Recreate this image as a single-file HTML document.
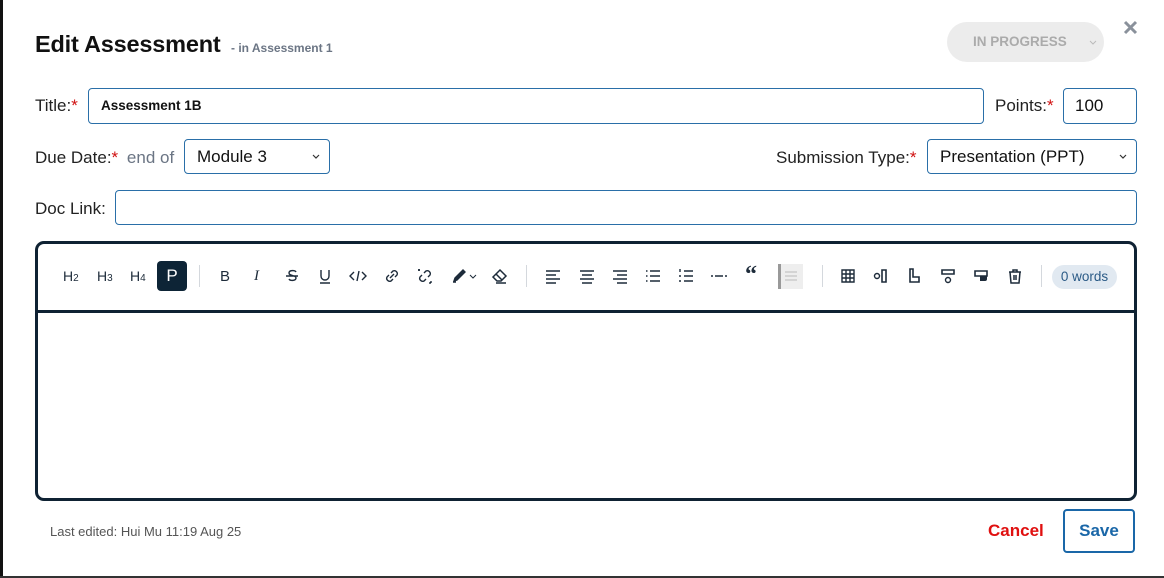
<!DOCTYPE html>
<html><head><meta charset="utf-8"><style>
*{box-sizing:border-box;margin:0;padding:0}
body{width:1164px;height:578px;background:#fff;font-family:"Liberation Sans",Arial,sans-serif;position:relative;overflow:hidden;color:#111}
.a{position:absolute}
.lbl{font-size:17px;color:#222;white-space:nowrap}
.req{color:#d01010}
.inp{position:absolute;border:1px solid #2a6fa8;border-radius:4px;background:#fff}
.sel{position:absolute;border:1px solid #2a6fa8;border-radius:4px;background:#fff;font-size:17px;padding-left:12px;display:flex;align-items:center}
.chev{position:absolute;right:8px;top:50%;margin-top:-4px}
.ic{position:absolute;top:266px;width:20px;height:20px}
.sep{position:absolute;top:265px;width:1px;height:22px;background:#d4d8dd}
.h{position:absolute;top:268px;font-size:14px;color:#1d2b3a}
.h small{font-size:10px}
</style></head><body>
<div class="a" style="left:0;top:0;width:3px;height:578px;background:#111"></div>
<div class="a" style="left:0;top:576px;width:1164px;height:2px;background:#333"></div>

<div class="a" style="left:35px;top:31px;font-size:23.5px;font-weight:bold;color:#111;letter-spacing:-0.2px">Edit Assessment</div>
<div class="a" style="left:231px;top:41px;font-size:12px;font-weight:bold;color:#6b7584;white-space:nowrap">- in Assessment 1</div>

<div class="a" style="left:947px;top:22px;width:157px;height:40px;border-radius:20px;background:#ececec;color:#ababab;font-weight:bold;font-size:13.5px;line-height:40px;padding-left:26px">IN PROGRESS
<svg class="chev" width="10" height="8" viewBox="0 0 10 8" style="right:6px"><path d="M2 3l3 3 3-3" fill="none" stroke="#bbb" stroke-width="1"/></svg></div>
<svg class="a" style="left:1123px;top:20px" width="15" height="15" viewBox="0 0 15 15"><path d="M2 2l11 11M13 2L2 13" stroke="#8a919b" stroke-width="3"/></svg>

<div class="a lbl" style="left:35px;top:96px">Title:<span class="req">*</span></div>
<div class="inp" style="left:88px;top:88px;width:896px;height:36px;font-size:13.5px;font-weight:bold;padding:9px 12px">Assessment 1B</div>
<div class="a lbl" style="left:995px;top:96px">Points:<span class="req">*</span></div>
<div class="inp" style="left:1063px;top:88px;width:74px;height:36px;font-size:17px;padding:7px 11px">100</div>

<div class="a lbl" style="left:35px;top:148px">Due Date:<span class="req">*</span> <span style="color:#6b7584;margin-left:4px">end of</span></div>
<div class="sel" style="left:184px;top:139px;width:146px;height:35px">Module 3<svg class="chev" width="10" height="8" viewBox="0 0 10 8"><path d="M2 2l3 3 3-3" fill="none" stroke="#333" stroke-width="1.2"/></svg></div>
<div class="a lbl" style="left:776px;top:148px">Submission Type:<span class="req">*</span></div>
<div class="sel" style="left:927px;top:139px;width:210px;height:35px">Presentation (PPT)<svg class="chev" width="10" height="8" viewBox="0 0 10 8"><path d="M2 2l3 3 3-3" fill="none" stroke="#333" stroke-width="1.2"/></svg></div>

<div class="a lbl" style="left:35px;top:199px">Doc Link:</div>
<div class="inp" style="left:115px;top:190px;width:1022px;height:35px"></div>

<div class="a" style="left:35px;top:241px;width:1102px;height:260px;border:3px solid #0f2233;border-radius:9px"></div>
<div class="a" style="left:37px;top:310px;width:1098px;height:3px;background:#0f2233"></div>

<div class="h" style="left:63px">H<small>2</small></div>
<div class="h" style="left:97px">H<small>3</small></div>
<div class="h" style="left:130px">H<small>4</small></div>
<div class="a" style="left:157px;top:261px;width:30px;height:30px;background:#0d2436;border-radius:4px;color:#fff;font-size:17px;text-align:center;line-height:30px">P</div>
<div class="sep" style="left:199px"></div>
<div class="h" style="left:220px;font-size:15px">B</div>
<div class="h" style="left:254px;font-size:15px;font-style:italic;font-family:'Liberation Serif',serif">I</div>
<svg class="ic" style="left:282px" viewBox="0 0 20 20"><path d="M14 6c-1-2-7-2-7 1 0 3 7 2 7 5 0 3-6 3-7 1M4 10h12" fill="none" stroke="#1d2b3a" stroke-width="1.4"/></svg>
<svg class="ic" style="left:315px" viewBox="0 0 20 20"><path d="M6 4v6a4 4 0 008 0V4M5 17h10" fill="none" stroke="#1d2b3a" stroke-width="1.4"/></svg>
<svg class="ic" style="left:348px" viewBox="0 0 20 20"><path d="M6 6l-4 4 4 4M14 6l4 4-4 4M11 5l-2 10" fill="none" stroke="#1d2b3a" stroke-width="1.4"/></svg>
<svg class="ic" style="left:382px" viewBox="0 0 20 20"><path d="M9 7l2-2a3 3 0 014 4l-2 2M11 13l-2 2a3 3 0 01-4-4l2-2M8 12l4-4" fill="none" stroke="#1d2b3a" stroke-width="1.4"/></svg>
<svg class="ic" style="left:415px" viewBox="0 0 20 20"><path d="M9 7l2-2a3 3 0 014 4l-2 2M11 13l-2 2a3 3 0 01-4-4l2-2M4 3v2M3 4h2M15 16v2M16 15v2" fill="none" stroke="#1d2b3a" stroke-width="1.4"/></svg>
<svg class="ic" style="left:450px" viewBox="0 0 20 20"><path d="M4 15l3-1 8-8-2-2-8 8zM3 16h3" fill="#1d2b3a" stroke="#1d2b3a" stroke-width="1.4"/></svg>
<svg class="ic" style="left:468px;width:10px" viewBox="0 0 10 20"><path d="M2 9l3 3 3-3" fill="none" stroke="#1d2b3a" stroke-width="1"/></svg>
<svg class="ic" style="left:490px" viewBox="0 0 20 20"><path d="M3 11l7-7 6 6-5 5H7zM6 8l6 6M6 17h10" fill="none" stroke="#1d2b3a" stroke-width="1.5"/></svg>
<div class="sep" style="left:526px"></div>
<svg class="ic" style="left:543px" viewBox="0 0 20 20"><path d="M3 5h14M3 9h10M3 13h14M3 17h10" stroke="#1d2b3a" stroke-width="1.4"/></svg>
<svg class="ic" style="left:577px" viewBox="0 0 20 20"><path d="M3 5h14M5 9h10M3 13h14M5 17h10" stroke="#1d2b3a" stroke-width="1.4"/></svg>
<svg class="ic" style="left:610px" viewBox="0 0 20 20"><path d="M3 5h14M7 9h10M3 13h14M7 17h10" stroke="#1d2b3a" stroke-width="1.4"/></svg>
<svg class="ic" style="left:643px" viewBox="0 0 20 20"><path d="M7 5h10M7 10h10M7 15h10M3 5h1.5M3 10h1.5M3 15h1.5" stroke="#1d2b3a" stroke-width="1.5"/></svg>
<svg class="ic" style="left:676px" viewBox="0 0 20 20"><path d="M8 5h9M8 10h9M8 15h9M3 10h2M3 15h2M4 3v3" stroke="#1d2b3a" stroke-width="1.4"/></svg>
<svg class="ic" style="left:709px" viewBox="0 0 20 20"><path d="M2 10h2M6 10h8M16 10h2" stroke="#1d2b3a" stroke-width="1.4"/></svg>
<div class="h" style="left:745px;font-size:24px;font-weight:bold;top:262px;font-family:'Liberation Serif',serif">“</div>
<div class="a" style="left:778px;top:264px;width:25px;height:25px;background:#eee;border-left:3px solid #999"></div>
<svg class="ic" style="left:781px" viewBox="0 0 20 20"><path d="M4 6h12M4 10h12M4 14h12" stroke="#bbb" stroke-width="1"/></svg>
<div class="sep" style="left:822px"></div>
<svg class="ic" style="left:838px" viewBox="0 0 20 20"><path d="M4 4h12v12H4zM4 8h12M4 12h12M8 4v12M12 4v12" fill="none" stroke="#1d2b3a" stroke-width="1.4"/></svg>
<svg class="ic" style="left:871px" viewBox="0 0 20 20"><circle cx="6" cy="10" r="2.5" fill="none" stroke="#1d2b3a" stroke-width="1.4"/><path d="M11 4h4v12h-4z" fill="none" stroke="#1d2b3a" stroke-width="1.6"/></svg>
<svg class="ic" style="left:904px" viewBox="0 0 20 20"><path d="M6 3v13h9v-5H9V3z" fill="none" stroke="#1d2b3a" stroke-width="1.6"/></svg>
<svg class="ic" style="left:938px" viewBox="0 0 20 20"><path d="M4 4h12v4H4z" fill="none" stroke="#1d2b3a" stroke-width="1.6"/><circle cx="10" cy="14" r="2.5" fill="none" stroke="#1d2b3a" stroke-width="1.4"/></svg>
<svg class="ic" style="left:971px" viewBox="0 0 20 20"><path d="M4 5h12v5H4z" fill="none" stroke="#1d2b3a" stroke-width="1.6"/><path d="M9 10h7v3a2 2 0 01-2 2h-5z" fill="#1d2b3a"/></svg>
<svg class="ic" style="left:1005px" viewBox="0 0 20 20"><path d="M4 6h12M8 6V4h4v2M5 6l1 11h8l1-11M9 9v5M11 9v5" fill="none" stroke="#1d2b3a" stroke-width="1.5"/></svg>
<div class="sep" style="left:1041px"></div>
<div class="a" style="left:1052px;top:265px;width:65px;height:24px;border-radius:12px;background:#e1e9f1;color:#2a5a86;font-size:13.5px;text-align:center;line-height:24px">0 words</div>

<div class="a" style="left:50px;top:524px;font-size:13px;color:#555">Last edited: Hui Mu 11:19 Aug 25</div>
<div class="a" style="left:988px;top:521px;font-size:17px;font-weight:bold;color:#e01010">Cancel</div>
<div class="a" style="left:1063px;top:509px;width:72px;height:44px;border:2px solid #1a67a8;border-radius:4px;color:#1a67a8;font-size:17px;font-weight:bold;text-align:center;line-height:40px">Save</div>
</body></html>
